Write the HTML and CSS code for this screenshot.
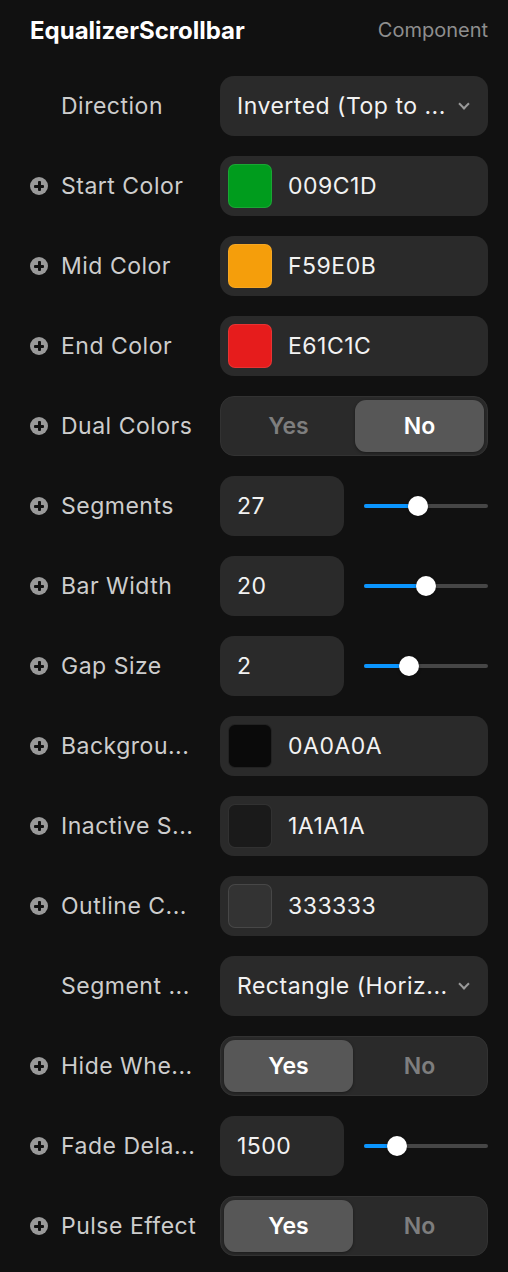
FILE: index.html
```html
<!DOCTYPE html>
<html lang="en">

<head>
    <meta charset="UTF-8">
    <meta name="viewport" content="width=device-width, initial-scale=1.0">
    <title>EqualizerScrollbar</title>
    <link rel="stylesheet" href="styles.css">
</head>

<body>
    <div class="panel">
        <div class="head">
            <span class="title">EqualizerScrollbar</span>
            <span class="kind">Component</span>
        </div>
        <ul class="props">
            <li class="row">
                <div class="label"><span class="name">Direction</span></div>
                <div class="box select"><span class="val">Inverted (Top to ...</span><span class="chev"></span></div>
            </li>
            <li class="row">
                <div class="label"><i class="plus"></i><span class="name">Start Color</span></div>
                <div class="box color"><span class="sw" style="background:#009C1D"></span><span class="val">009C1D</span></div>
            </li>
            <li class="row">
                <div class="label"><i class="plus"></i><span class="name">Mid Color</span></div>
                <div class="box color"><span class="sw" style="background:#F59E0B"></span><span class="val">F59E0B</span></div>
            </li>
            <li class="row">
                <div class="label"><i class="plus"></i><span class="name">End Color</span></div>
                <div class="box color"><span class="sw" style="background:#E61C1C"></span><span class="val">E61C1C</span></div>
            </li>
            <li class="row">
                <div class="label"><i class="plus"></i><span class="name">Dual Colors</span></div>
                <div class="seg"><span class="opt">Yes</span><span class="opt on">No</span></div>
            </li>
            <li class="row">
                <div class="label"><i class="plus"></i><span class="name">Segments</span></div>
                <div class="num"><div class="box field">27</div><div class="slider"><span class="fill" style="width:54px"></span><span class="knob" style="left:44px"></span></div></div>
            </li>
            <li class="row">
                <div class="label"><i class="plus"></i><span class="name">Bar Width</span></div>
                <div class="num"><div class="box field">20</div><div class="slider"><span class="fill" style="width:62px"></span><span class="knob" style="left:52px"></span></div></div>
            </li>
            <li class="row">
                <div class="label"><i class="plus"></i><span class="name">Gap Size</span></div>
                <div class="num"><div class="box field">2</div><div class="slider"><span class="fill" style="width:45px"></span><span class="knob" style="left:35px"></span></div></div>
            </li>
            <li class="row">
                <div class="label"><i class="plus"></i><span class="name">Backgrou...</span></div>
                <div class="box color"><span class="sw" style="background:#0A0A0A"></span><span class="val">0A0A0A</span></div>
            </li>
            <li class="row">
                <div class="label"><i class="plus"></i><span class="name">Inactive S...</span></div>
                <div class="box color"><span class="sw" style="background:#1A1A1A"></span><span class="val">1A1A1A</span></div>
            </li>
            <li class="row">
                <div class="label"><i class="plus"></i><span class="name">Outline C...</span></div>
                <div class="box color"><span class="sw" style="background:#333333"></span><span class="val">333333</span></div>
            </li>
            <li class="row">
                <div class="label"><span class="name">Segment ...</span></div>
                <div class="box select"><span class="val">Rectangle (Horiz...</span><span class="chev"></span></div>
            </li>
            <li class="row">
                <div class="label"><i class="plus"></i><span class="name">Hide Whe...</span></div>
                <div class="seg"><span class="opt on">Yes</span><span class="opt">No</span></div>
            </li>
            <li class="row">
                <div class="label"><i class="plus"></i><span class="name">Fade Dela...</span></div>
                <div class="num"><div class="box field">1500</div><div class="slider"><span class="fill" style="width:33px"></span><span class="knob" style="left:23px"></span></div></div>
            </li>
            <li class="row">
                <div class="label"><i class="plus"></i><span class="name">Pulse Effect</span></div>
                <div class="seg"><span class="opt on">Yes</span><span class="opt">No</span></div>
            </li>
        </ul>
    </div>
</body>

</html>
```

FILE: styles.css
```css
* {
    margin: 0;
    padding: 0;
    box-sizing: border-box;
}

body {
    background-color: #111111;
    font-family: Inter, "Noto Sans", sans-serif;
    color: #ffffff;
}

.panel {
    width: 508px;
    padding: 0 20px 0 30px;
}

.head {
    display: flex;
    justify-content: space-between;
    align-items: center;
    height: 60px;
}

.title {
    font-size: 24px;
    font-weight: 700;
}

.kind {
    font-size: 20px;
    color: #8e8e8e;
}

.props {
    list-style: none;
    padding-top: 16px;
    display: flex;
    flex-direction: column;
    gap: 20px;
}

.row {
    display: flex;
    align-items: center;
    height: 60px;
}

.label {
    width: 190px;
    display: flex;
    align-items: center;
    padding-left: 31px;
    position: relative;
}

.name {
    font-size: 23px;
    font-weight: 400;
    color: #cdcdcd;
    letter-spacing: 0.5px;
    white-space: nowrap;
}

.plus {
    position: absolute;
    left: 0;
    top: 50%;
    margin-top: -9px;
    width: 18px;
    height: 18px;
    border-radius: 9px;
    background-color: #9a9a9a;
}

.plus::before,
.plus::after {
    content: "";
    position: absolute;
    background-color: #111111;
    border-radius: 1px;
}

.plus::before {
    left: 4px;
    top: 7.5px;
    width: 10px;
    height: 3px;
}

.plus::after {
    left: 7.5px;
    top: 4px;
    width: 3px;
    height: 10px;
}

.box {
    height: 60px;
    border-radius: 14px;
    background-color: #2a2a2a;
    display: flex;
    align-items: center;
    font-size: 23px;
    font-weight: 400;
    color: #f2f2f2;
    letter-spacing: 0.5px;
    white-space: nowrap;
}

.select,
.color {
    width: 268px;
}

.select {
    padding: 0 20px 0 17px;
    justify-content: space-between;
}

.chev {
    width: 8px;
    height: 8px;
    border-right: 2px solid #9a9a9a;
    border-bottom: 2px solid #9a9a9a;
    transform: rotate(45deg);
    margin-top: -5px;
}

.color {
    padding-left: 8px;
    gap: 16px;
}

.sw {
    width: 44px;
    height: 44px;
    border-radius: 7px;
    border: 1px solid rgba(255, 255, 255, 0.1);
}

.seg {
    width: 268px;
    height: 60px;
    border-radius: 14px;
    background-color: #2a2a2a;
    border: 1px solid #323232;
    padding: 3px;
    display: flex;
    gap: 2px;
}

.opt {
    flex: 1;
    border-radius: 11px;
    display: flex;
    align-items: center;
    justify-content: center;
    font-size: 23px;
    font-weight: 600;
    color: #7e7e7e;
}

.opt.on {
    background-color: #575757;
    color: #ffffff;
    box-shadow: 0 1px 3px rgba(0, 0, 0, 0.4);
}

.num {
    display: flex;
    align-items: center;
    gap: 20px;
    width: 268px;
}

.field {
    width: 124px;
    padding-left: 17px;
}

.slider {
    position: relative;
    flex: 1;
    height: 4px;
    border-radius: 2px;
    background-color: #464646;
}

.fill {
    position: absolute;
    left: 0;
    top: 0;
    height: 4px;
    border-radius: 2px;
    background-color: #0a95ff;
}

.knob {
    position: absolute;
    top: -8px;
    width: 20px;
    height: 20px;
    border-radius: 10px;
    background-color: #ffffff;
    box-shadow: 0 1px 3px rgba(0, 0, 0, 0.4);
}
```
